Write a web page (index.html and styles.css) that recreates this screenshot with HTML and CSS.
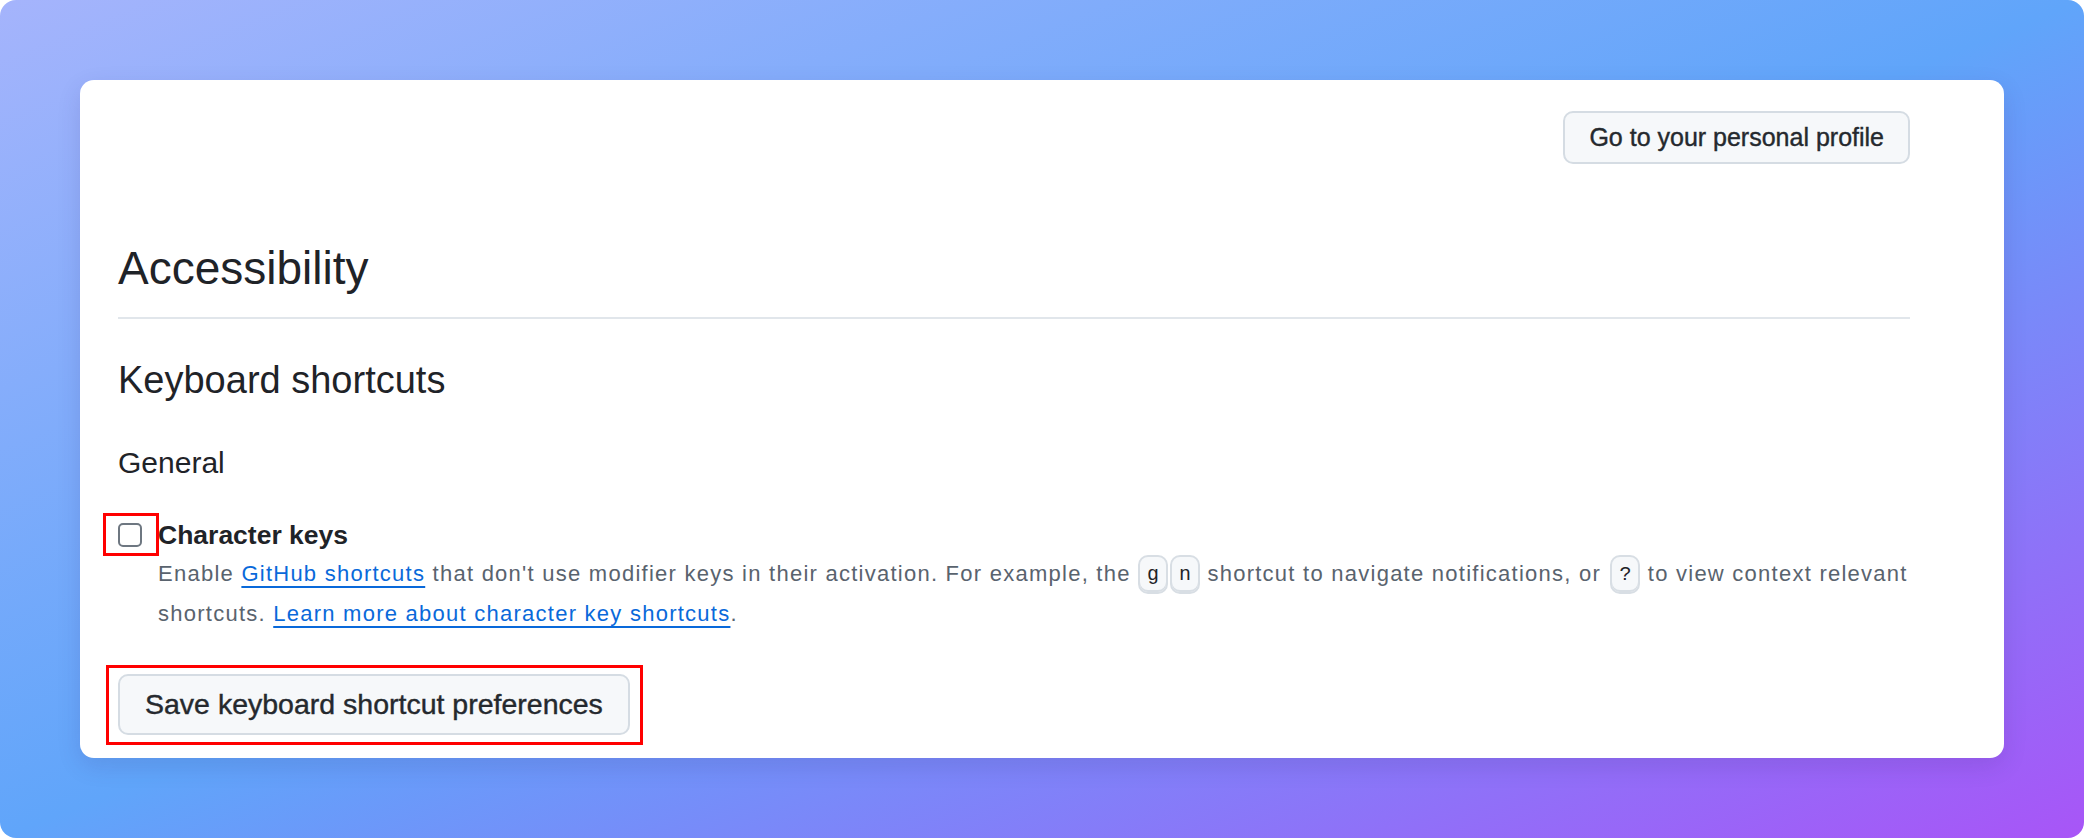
FILE: index.html
```html
<!DOCTYPE html>
<html lang="en">
<head>
<meta charset="utf-8">
<title>Accessibility settings</title>
<link rel="stylesheet" href="styles.css">
</head>
<body>
<div class="bg">
  <main class="card">
    <div class="top-actions">
      <button class="btn btn-top" type="button">Go to your personal profile</button>
    </div>
    <div class="subhead">
      <h2 class="subhead-title">Accessibility</h2>
    </div>
    <h3 class="section-title">Keyboard shortcuts</h3>
    <h4 class="group-title">General</h4>
    <div class="check-row">
      <span class="check-wrap"><input class="checkbox" type="checkbox" id="charkeys"></span>
      <div class="check-body">
        <label class="check-label" for="charkeys">Character keys</label>
        <p class="note">Enable <a href="#">GitHub shortcuts</a> that don't use modifier keys in their activation. For example, the <kbd>g</kbd><kbd>n</kbd> shortcut to navigate notifications, or <kbd>?</kbd> to view context relevant shortcuts. <a href="#">Learn more about character key shortcuts</a>.</p>
      </div>
    </div>
    <div class="save-row">
      <span class="save-wrap"><button class="btn btn-save" type="button">Save keyboard shortcut preferences</button></span>
    </div>
  </main>
</div>
</body>
</html>
```

FILE: styles.css
```css
html, body {
  margin: 0;
  background: #ffffff;
}

body {
  font-family: "Liberation Sans", Arial, sans-serif;
}

.bg {
  height: 838px;
  box-sizing: border-box;
  padding: 80px;
  border-radius: 16px;
  background: linear-gradient(to bottom right, #a5b4fc 0%, #60a5fa 50%, #a855f7 100%);
  display: flex;
  flex-direction: column;
}

.card {
  flex: 1;
  background: #ffffff;
  border-radius: 14px;
  padding: 31px 94px 0 38px;
  box-shadow: 0 8px 24px rgba(40, 20, 90, 0.12);
  color: #1f2328;
}

.top-actions {
  display: flex;
  justify-content: flex-end;
}

.btn {
  font-family: inherit;
  color: #25292e;
  background: #f6f8fa;
  border: 2px solid #d5dce3;
  border-radius: 10px;
  display: inline-flex;
  align-items: center;
  justify-content: center;
  box-sizing: border-box;
  -webkit-text-stroke: 0.4px #25292e;
  cursor: pointer;
  white-space: nowrap;
}

.btn-top {
  height: 53px;
  padding: 0 24px;
  font-size: 25px;
}

.subhead {
  margin-top: 75px;
  padding-bottom: 20px;
  border-bottom: 2px solid #e1e6eb;
}

.subhead-title {
  margin: 0;
  font-size: 46px;
  line-height: 58px;
  font-weight: 400;
}

.section-title {
  margin: 37px 0 0;
  font-size: 38px;
  line-height: 48px;
  font-weight: 400;
}

.group-title {
  margin: 40px 0 0;
  font-size: 30px;
  line-height: 38px;
  font-weight: 400;
}

.check-row {
  display: flex;
  gap: 16px;
  margin-top: 37px;
}

.check-wrap {
  position: relative;
  flex: none;
  margin-top: 4px;
  height: 24px;
}

.check-wrap::after {
  content: "";
  position: absolute;
  left: -15px;
  top: -10px;
  width: 56px;
  height: 43px;
  border: 3px solid #ff0000;
  box-sizing: border-box;
  pointer-events: none;
}

.checkbox {
  -webkit-appearance: none;
  appearance: none;
  display: block;
  width: 24px;
  height: 24px;
  margin: 0;
  border: 2px solid #6e7781;
  border-radius: 5px;
  background: #ffffff;
  box-sizing: border-box;
}

.check-body {
  flex: 1;
  margin-right: -30px;
}

.check-label {
  display: block;
  font-size: 26.5px;
  line-height: 32px;
  font-weight: 700;
}

.note {
  margin: 3px 0 0;
  font-size: 22px;
  line-height: 39px;
  letter-spacing: 1.25px;
  color: #59636e;
}

.note a {
  color: #0969da;
  text-decoration: underline;
  text-decoration-thickness: 2px;
  text-underline-offset: 5px;
}

kbd {
  display: inline-block;
  font-family: "Liberation Mono", monospace;
  font-size: 20px;
  line-height: 19px;
  padding: 8px 7px 8px;
  letter-spacing: 0;
  color: #1f2328;
  background: #f6f8fa;
  border: 2px solid #d8dee4;
  border-radius: 10px;
  box-shadow: inset 0 -2px 0 #d8dee4;
  vertical-align: 1px;
}

kbd + kbd {
  margin-left: 2px;
}

.save-row {
  margin-top: 41px;
}

.save-wrap {
  position: relative;
  display: inline-block;
}

.save-wrap::after {
  content: "";
  position: absolute;
  left: -12px;
  top: -9px;
  right: -13px;
  bottom: -10px;
  border: 3px solid #ff0000;
  pointer-events: none;
}

.btn-save {
  height: 61px;
  padding: 0 25px;
  font-size: 28.5px;
}
```
